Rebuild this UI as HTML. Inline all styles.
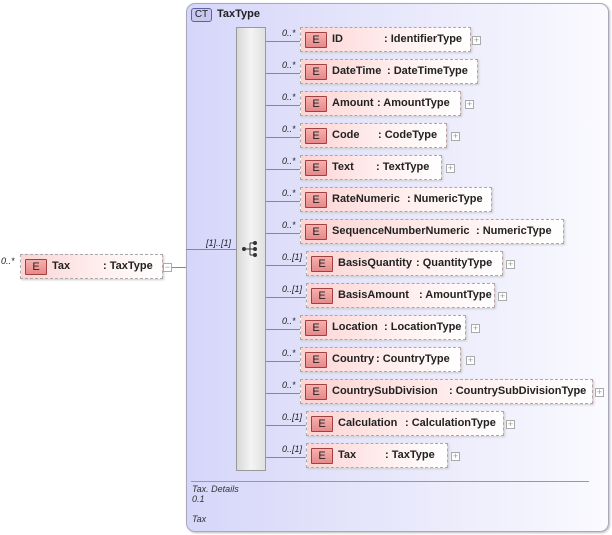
<!DOCTYPE html>
<html><head><meta charset="utf-8"><style>
*{margin:0;padding:0;box-sizing:border-box}
body{width:612px;height:535px;background:#fff;position:relative;overflow:hidden;font-family:"Liberation Sans",sans-serif}
.a{position:absolute}
.ct{left:186px;top:3px;width:423px;height:529px;border:1px solid #a8a8b8;border-radius:9px;background:linear-gradient(90deg,#d6d6fa 0%,#e6e6fb 45%,#fafaff 100%);box-shadow:1px 1px 2px #bbb}
.seq{left:236px;top:27px;width:30px;height:444px;background:linear-gradient(90deg,#d8d8d8,#f4f4f4 50%,#e0e0e0);border:1px solid #999}
.el{position:absolute;height:25px;border:1px dashed #aaa;background:linear-gradient(90deg,#fcd4d4,#fff0f0 60%,#fff);box-shadow:1px 1px 2px #ccc;font-size:11px;font-weight:bold;color:#222;white-space:nowrap}
.e{position:absolute;left:4px;top:4px;width:22px;height:16px;border:1px solid #a04040;background:linear-gradient(#f6b0b0,#e88888);border-radius:1px;font-weight:normal;font-size:11px;text-align:center;line-height:14px;color:#222}
.el .n{position:absolute;top:5px}
.pl{position:absolute;width:9px;height:9px;border:1px solid #aaa;background:#fff;font-size:9px;line-height:7px;text-align:center;color:#999}
.ln{position:absolute;height:1px;background:#888}
.m{position:absolute;font-size:9px;font-style:italic;color:#222}
.t{position:absolute;font-size:9px;font-style:italic;color:#333}
</style></head><body>
<div class="a ct"></div>
<div class="a" style="left:191px;top:8px;width:21px;height:14px;border:1px solid #6060a0;border-radius:3px;background:#c8c8f0;font-size:10px;text-align:center;line-height:12px;color:#222">CT</div>
<div class="a" style="left:217px;top:8px;font-size:11px;font-weight:bold;color:#222">TaxType</div>
<div class="a seq"></div>
<svg class="a" style="left:240px;top:240px" width="24" height="20"><circle cx="4" cy="9" r="2" fill="#333"/><line x1="4" y1="9" x2="10" y2="9" stroke="#333"/><line x1="10" y1="3" x2="10" y2="15" stroke="#333"/><line x1="10" y1="3" x2="15" y2="3" stroke="#333"/><line x1="10" y1="9" x2="15" y2="9" stroke="#333"/><line x1="10" y1="15" x2="15" y2="15" stroke="#333"/><circle cx="15" cy="3" r="2" fill="#333"/><circle cx="15" cy="9" r="2" fill="#333"/><circle cx="15" cy="15" r="2" fill="#333"/></svg>

<!-- left Tax -->
<div class="m" style="left:1px;top:256px">0..*</div>
<div class="el" style="left:20px;top:254px;width:143px"><div class="e">E</div><span class="n" style="left:31px">Tax</span><span class="n" style="left:82px">: TaxType</span></div>
<div class="pl" style="left:163px;top:263px">−</div>
<div class="ln" style="left:172px;top:267px;width:14px"></div>
<div class="ln" style="left:186px;top:249px;width:50px"></div>
<div class="m" style="left:206px;top:238px">[1]..[1]</div>

<!-- rows -->
<div class="ln" style="left:266px;top:41px;width:34px"></div><div class="m" style="left:282px;top:28px">0..*</div>
<div class="el" style="left:300px;top:27px;width:171px"><div class="e">E</div><span class="n" style="left:31px">ID</span><span class="n" style="left:83px">: IdentifierType</span></div><div class="pl" style="left:472px;top:36px">+</div>

<div class="ln" style="left:266px;top:73px;width:34px"></div><div class="m" style="left:282px;top:60px">0..*</div>
<div class="el" style="left:300px;top:59px;width:178px"><div class="e">E</div><span class="n" style="left:31px">DateTime</span><span class="n" style="left:86px">: DateTimeType</span></div>

<div class="ln" style="left:266px;top:105px;width:34px"></div><div class="m" style="left:282px;top:92px">0..*</div>
<div class="el" style="left:300px;top:91px;width:161px"><div class="e">E</div><span class="n" style="left:31px">Amount</span><span class="n" style="left:76px">: AmountType</span></div><div class="pl" style="left:465px;top:100px">+</div>

<div class="ln" style="left:266px;top:137px;width:34px"></div><div class="m" style="left:282px;top:124px">0..*</div>
<div class="el" style="left:300px;top:123px;width:147px"><div class="e">E</div><span class="n" style="left:31px">Code</span><span class="n" style="left:77px">: CodeType</span></div><div class="pl" style="left:451px;top:132px">+</div>

<div class="ln" style="left:266px;top:169px;width:34px"></div><div class="m" style="left:282px;top:156px">0..*</div>
<div class="el" style="left:300px;top:155px;width:142px"><div class="e">E</div><span class="n" style="left:31px">Text</span><span class="n" style="left:75px">: TextType</span></div><div class="pl" style="left:446px;top:164px">+</div>

<div class="ln" style="left:266px;top:201px;width:34px"></div><div class="m" style="left:282px;top:188px">0..*</div>
<div class="el" style="left:300px;top:187px;width:192px"><div class="e">E</div><span class="n" style="left:31px">RateNumeric</span><span class="n" style="left:106px">: NumericType</span></div>

<div class="ln" style="left:266px;top:233px;width:34px"></div><div class="m" style="left:282px;top:220px">0..*</div>
<div class="el" style="left:300px;top:219px;width:264px"><div class="e">E</div><span class="n" style="left:31px">SequenceNumberNumeric</span><span class="n" style="left:175px">: NumericType</span></div>

<div class="ln" style="left:266px;top:265px;width:40px"></div><div class="m" style="left:282px;top:252px">0..[1]</div>
<div class="el" style="left:306px;top:251px;width:197px"><div class="e">E</div><span class="n" style="left:31px">BasisQuantity</span><span class="n" style="left:109px">: QuantityType</span></div><div class="pl" style="left:506px;top:260px">+</div>

<div class="ln" style="left:266px;top:297px;width:40px"></div><div class="m" style="left:282px;top:284px">0..[1]</div>
<div class="el" style="left:306px;top:283px;width:189px"><div class="e">E</div><span class="n" style="left:31px">BasisAmount</span><span class="n" style="left:112px">: AmountType</span></div><div class="pl" style="left:498px;top:292px">+</div>

<div class="ln" style="left:266px;top:329px;width:34px"></div><div class="m" style="left:282px;top:316px">0..*</div>
<div class="el" style="left:300px;top:315px;width:166px"><div class="e">E</div><span class="n" style="left:31px">Location</span><span class="n" style="left:83px">: LocationType</span></div><div class="pl" style="left:471px;top:324px">+</div>

<div class="ln" style="left:266px;top:361px;width:34px"></div><div class="m" style="left:282px;top:348px">0..*</div>
<div class="el" style="left:300px;top:347px;width:161px"><div class="e">E</div><span class="n" style="left:31px">Country</span><span class="n" style="left:75px">: CountryType</span></div><div class="pl" style="left:466px;top:356px">+</div>

<div class="ln" style="left:266px;top:393px;width:34px"></div><div class="m" style="left:282px;top:380px">0..*</div>
<div class="el" style="left:300px;top:379px;width:293px"><div class="e">E</div><span class="n" style="left:31px">CountrySubDivision</span><span class="n" style="left:148px">: CountrySubDivisionType</span></div><div class="pl" style="left:595px;top:388px">+</div>

<div class="ln" style="left:266px;top:425px;width:40px"></div><div class="m" style="left:282px;top:412px">0..[1]</div>
<div class="el" style="left:306px;top:411px;width:198px"><div class="e">E</div><span class="n" style="left:31px">Calculation</span><span class="n" style="left:98px">: CalculationType</span></div><div class="pl" style="left:506px;top:420px">+</div>

<div class="ln" style="left:266px;top:457px;width:40px"></div><div class="m" style="left:282px;top:444px">0..[1]</div>
<div class="el" style="left:306px;top:443px;width:142px"><div class="e">E</div><span class="n" style="left:31px">Tax</span><span class="n" style="left:78px">: TaxType</span></div><div class="pl" style="left:451px;top:452px">+</div>

<div class="ln" style="left:191px;top:481px;width:398px;background:#999"></div>
<div class="t" style="left:192px;top:484px">Tax. Details</div>
<div class="t" style="left:192px;top:494px">0.1</div>
<div class="t" style="left:192px;top:514px">Tax</div>
</body></html>
